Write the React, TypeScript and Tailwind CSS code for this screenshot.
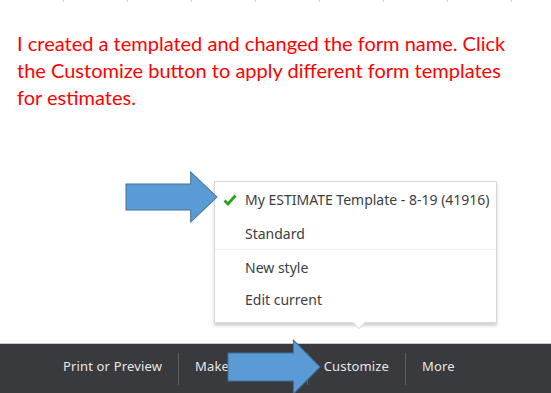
import { Fragment } from "react";

const barItems = ["Print or Preview", "Make recurring", "Customize", "More"];

function BlockArrow({ className }: { className: string }) {
  return (
    <svg viewBox="0 0 92 52" className={className} preserveAspectRatio="none">
      <polygon
        points="1,13 65,13 65,1 91,26 65,51 65,39 1,39"
        fill="#5b9bd5"
        stroke="#41719c"
        strokeWidth="1"
      />
    </svg>
  );
}

export default function App() {
  return (
    <div className="relative flex h-[393px] w-[551px] flex-col overflow-hidden bg-white font-['Lato',sans-serif]">
      {/* faint sheet gridlines */}
      <div className="flex h-[2px] gap-[63px] pl-[63px]">
        {Array.from({ length: 8 }).map((_, i) => (
          <div key={i} className="h-full w-px bg-[#d4d4d4]" />
        ))}
      </div>

      <p className="mt-[28px] pl-[17px] pr-6 text-[20px] leading-[27px] text-[#ff0000]">
        I created a templated and changed the form name. Click the Customize
        button to apply different form templates for estimates.
      </p>

      <div className="flex-1" />

      <div className="flex h-[50px] items-center border-t border-[#c8c8c8] bg-[#393a3d] pb-[3px] pl-[47px] font-['Noto_Sans',sans-serif] text-[13px] tracking-[0.15px] text-[#e6e6e6]">
        {barItems.map((label, i) => (
          <Fragment key={label}>
            {i > 0 && <div className="mt-[3px] h-[32px] w-px bg-[#5d5e61]" />}
            <span className="px-4">{label}</span>
          </Fragment>
        ))}
      </div>

      {/* template dropdown */}
      <div className="absolute left-[214px] top-[181px] w-[283px] border border-[#d9d9d9] bg-white font-['Noto_Sans',sans-serif] text-[14px] text-[#3d3e41] shadow-[0_3px_3px_rgba(0,0,0,0.18)]">
        <div className="flex h-[35px] items-center pl-[8px]">
          <svg viewBox="0 0 14 12" className="mr-[8px] h-[12px] w-[14px]">
            <path
              d="M1.5 6.5 L5 10 L12.5 1.5"
              fill="none"
              stroke="#2ca01c"
              strokeWidth="2.8"
            />
          </svg>
          My ESTIMATE Template - 8-19 (41916)
        </div>
        <div className="flex h-[32px] items-center pl-[30px]">Standard</div>
        <div className="border-t border-[#ececec]" />
        <div className="flex h-[34px] items-center pl-[30px]">New style</div>
        <div className="flex h-[38px] items-center pb-[8px] pl-[30px]">
          Edit current
        </div>
        <div className="absolute -bottom-[7px] left-[137px] h-0 w-0 border-x-[7px] border-t-[7px] border-x-transparent border-t-[#d6d6d6]" />
        <div className="absolute -bottom-[6px] left-[138px] h-0 w-0 border-x-[6px] border-t-[6px] border-x-transparent border-t-white" />
      </div>

      <BlockArrow className="absolute left-[125px] top-[171px] h-[52px] w-[93px]" />
      <BlockArrow className="absolute left-[227px] top-[339px] h-[56px] w-[94px]" />
    </div>
  );
}
